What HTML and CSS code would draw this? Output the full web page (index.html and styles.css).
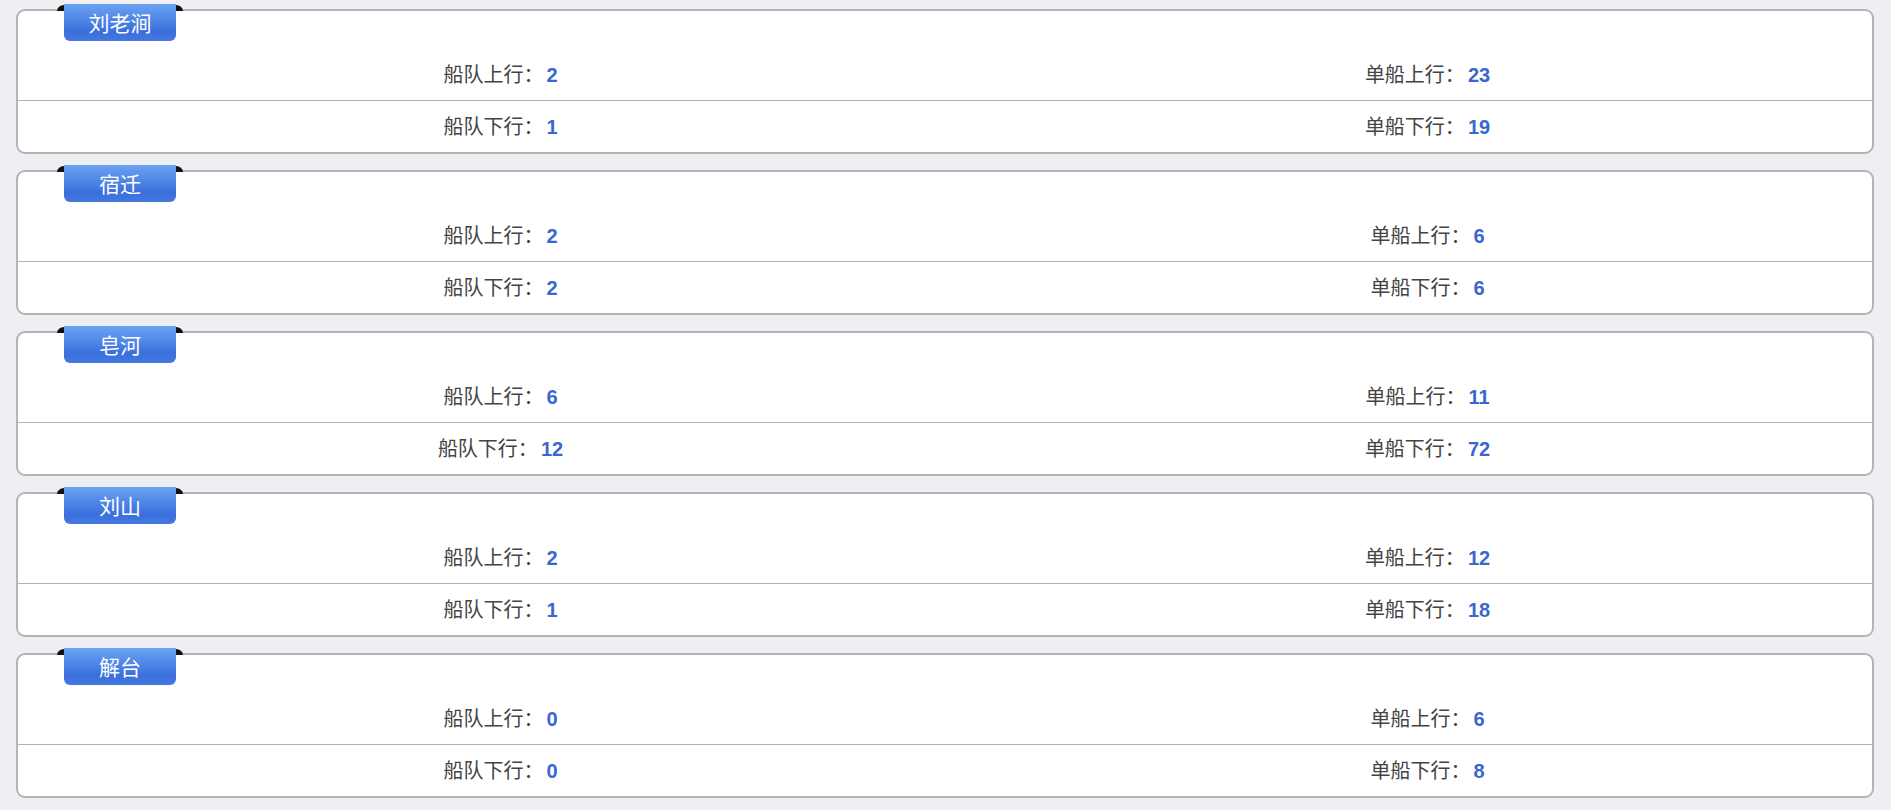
FILE: index.html
```html
<!DOCTYPE html>
<html lang="zh-CN">
<head>
<meta charset="utf-8">
<title>船舶统计</title>
<link rel="stylesheet" href="styles.css">
</head>
<body>
<div class="page">
  <section class="station">
    <div class="tab">刘老涧</div>
    <div class="head"></div>
    <div class="row"><div class="cell">船队上行：<b>2</b></div><div class="cell">单船上行：<b>23</b></div></div>
    <div class="row sep"><div class="cell">船队下行：<b>1</b></div><div class="cell">单船下行：<b>19</b></div></div>
  </section>
  <section class="station">
    <div class="tab">宿迁</div>
    <div class="head"></div>
    <div class="row"><div class="cell">船队上行：<b>2</b></div><div class="cell">单船上行：<b>6</b></div></div>
    <div class="row sep"><div class="cell">船队下行：<b>2</b></div><div class="cell">单船下行：<b>6</b></div></div>
  </section>
  <section class="station">
    <div class="tab">皂河</div>
    <div class="head"></div>
    <div class="row"><div class="cell">船队上行：<b>6</b></div><div class="cell">单船上行：<b>11</b></div></div>
    <div class="row sep"><div class="cell">船队下行：<b>12</b></div><div class="cell">单船下行：<b>72</b></div></div>
  </section>
  <section class="station">
    <div class="tab">刘山</div>
    <div class="head"></div>
    <div class="row"><div class="cell">船队上行：<b>2</b></div><div class="cell">单船上行：<b>12</b></div></div>
    <div class="row sep"><div class="cell">船队下行：<b>1</b></div><div class="cell">单船下行：<b>18</b></div></div>
  </section>
  <section class="station">
    <div class="tab">解台</div>
    <div class="head"></div>
    <div class="row"><div class="cell">船队上行：<b>0</b></div><div class="cell">单船上行：<b>6</b></div></div>
    <div class="row sep"><div class="cell">船队下行：<b>0</b></div><div class="cell">单船下行：<b>8</b></div></div>
  </section>
</div>
</body>
</html>
```
FILE: styles.css
```css
html, body {
  margin: 0;
  padding: 0;
  background: #eeeef3;
}
body {
  font-family: "Noto Sans CJK SC", "Noto Sans", sans-serif;
  color: #444;
}
.page {
  display: flex;
  flex-direction: column;
  gap: 16px;
  padding: 9px 17px 12px 16px;
}
.station {
  position: relative;
  height: 145px;
  box-sizing: border-box;
  background: #fff;
  border: 2px solid #b4b4b8;
  border-radius: 9px;
}
.tab {
  position: absolute;
  top: -7px;
  left: 46px;
  width: 112px;
  height: 37px;
  box-sizing: border-box;
  padding-top: 5px;
  text-align: center;
  font-size: 21px;
  line-height: 26px;
  color: #fff;
  background: linear-gradient(#6ba3f2, #3a6fdc 75%, #4579e0);
  border-radius: 0 0 6px 6px;
}
.tab::before,
.tab::after {
  content: "";
  position: absolute;
  top: 1px;
  width: 7px;
  height: 6px;
  background: #111;
}
.tab::before {
  left: -7px;
  border-top-left-radius: 7px 6px;
}
.tab::after {
  right: -7px;
  border-top-right-radius: 7px 6px;
}
.head {
  height: 37px;
}
.row {
  display: grid;
  grid-template-columns: 1fr 1fr;
  height: 52px;
}
.row.sep {
  border-top: 1px solid #b4b4b4;
  height: 52px;
}
.cell {
  padding-left: 38px;
  text-align: center;
  font-size: 20px;
  line-height: 51px;
  color: #444;
}
.sep .cell {
  line-height: 49px;
}
.cell b {
  font-family: "Liberation Sans", Arial, sans-serif;
  font-weight: bold;
  font-size: 20px;
  color: #3a67cf;
  margin-left: 3px;
}
```
